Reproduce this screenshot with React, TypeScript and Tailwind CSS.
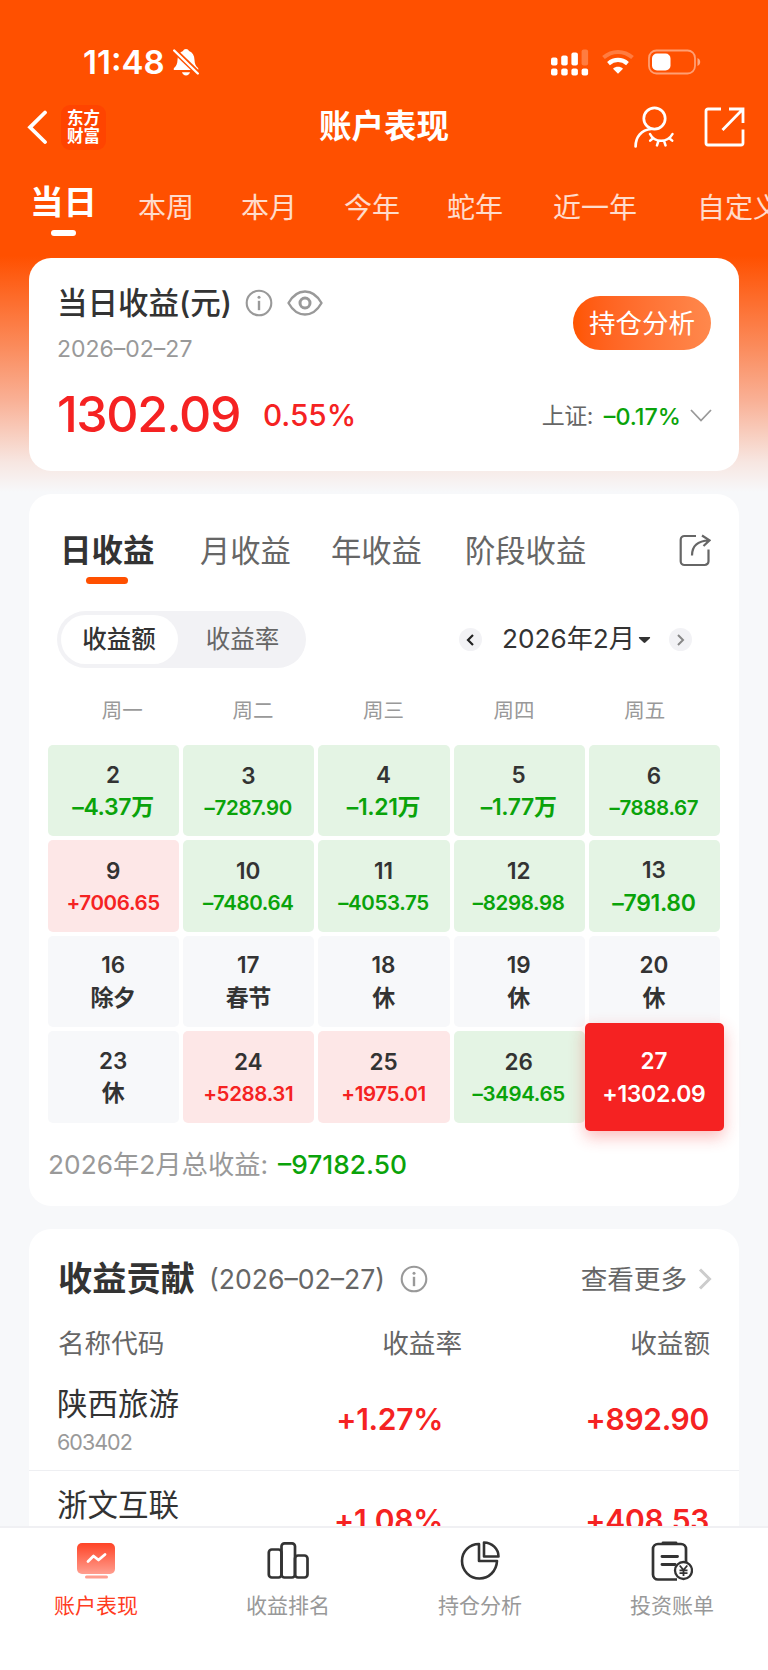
import { clsx } from 'clsx'

type Tone = 'up' | 'down' | 'rest' | 'active'

interface Day {
  day: number
  value: string
  tone: Tone
}

const ranges = [
  { label: '本周', width: 'w-[103px]' },
  { label: '本月', width: 'w-[103px]' },
  { label: '今年', width: 'w-[103px]' },
  { label: '蛇年', width: 'w-[106px]' },
  { label: '近一年', width: 'w-[144px]' },
  { label: '自定义', width: 'w-[90px]' },
]

const weekdays = ['周一', '周二', '周三', '周四', '周五']

const days: Day[] = [
  { day: 2, value: '–4.37万', tone: 'down' },
  { day: 3, value: '–7287.90', tone: 'down' },
  { day: 4, value: '–1.21万', tone: 'down' },
  { day: 5, value: '–1.77万', tone: 'down' },
  { day: 6, value: '–7888.67', tone: 'down' },
  { day: 9, value: '+7006.65', tone: 'up' },
  { day: 10, value: '–7480.64', tone: 'down' },
  { day: 11, value: '–4053.75', tone: 'down' },
  { day: 12, value: '–8298.98', tone: 'down' },
  { day: 13, value: '–791.80', tone: 'down' },
  { day: 16, value: '除夕', tone: 'rest' },
  { day: 17, value: '春节', tone: 'rest' },
  { day: 18, value: '休', tone: 'rest' },
  { day: 19, value: '休', tone: 'rest' },
  { day: 20, value: '休', tone: 'rest' },
  { day: 23, value: '休', tone: 'rest' },
  { day: 24, value: '+5288.31', tone: 'up' },
  { day: 25, value: '+1975.01', tone: 'up' },
  { day: 26, value: '–3494.65', tone: 'down' },
  { day: 27, value: '+1302.09', tone: 'active' },
]

const toneStyles: Record<Tone, string> = {
  up: 'bg-[#fde7e7] text-[#f52222]',
  down: 'bg-[#e4f4e4] text-[#0aa30a]',
  rest: 'bg-[#f7f8fa] text-[#333333]',
  active: 'bg-[#f52222] text-white',
}

function InfoIcon() {
  return (
    <svg className="h-[28px] w-[28px] shrink-0" viewBox="0 0 28 28" fill="none" stroke="#999999">
      <circle cx="14" cy="14" r="12.3" strokeWidth="2.1" />
      <circle cx="14" cy="8.2" r="1.5" fill="#999999" stroke="none" />
      <path d="M14 11.8v9.4" strokeWidth="2.4" />
    </svg>
  )
}

function StatusBar() {
  return (
    <div className="flex h-[84px] items-end justify-between pr-[67px] pl-[83px]">
      <div className="flex h-[44px] items-center">
        <span className="w-[90px] pt-[1px] text-[33px] leading-none font-semibold text-white">11:48</span>
        <svg className="h-[28px] w-[26px]" viewBox="0 0 26 28" fill="none">
          <path
            d="M13 1c-1.4 0-2.6.9-3 2.1C6.5 4.5 4.6 7.6 4.5 12c-.1 4-1.2 5.8-3 7.500-.9.9-1 1.500-.6 2.500h24.200c.5-1 .3-1.700-.6-2.500-1.800-1.700-2.900-3.500-3-7.500-.1-4.400-2-7.500-5.500-8.900C15.600 1.900 14.400 1 13 1z"
            fill="#fff"
          />
          <path d="M9 24.200h8c-.5 2-2 3.200-4 3.200s-3.500-1.200-4-3.200z" fill="#fff" />
          <path d="M0 1.200 26 26.200" stroke="#ff5000" strokeWidth="5.400" />
          <path d="M1.200 2.500 24.800 25.500" stroke="#fff" strokeWidth="2.400" strokeLinecap="round" />
        </svg>
      </div>
      <div className="flex h-[44px] items-center">
        <svg className="h-[28px] w-[38px]" viewBox="0 0 38 28" fill="#fff">
          <rect x="0" y="9.500" width="6.500" height="8" rx="2" />
          <rect x="10.200" y="7.500" width="6.500" height="10" rx="2" />
          <rect x="20.400" y="4.500" width="6.500" height="13" rx="2" />
          <rect x="30.600" y="1.500" width="6.500" height="16" rx="2" fillOpacity=".25" />
          <rect x="0" y="20.500" width="6.500" height="7" rx="2" />
          <rect x="10.200" y="20.500" width="6.500" height="7" rx="2" />
          <rect x="20.400" y="20.500" width="6.500" height="7" rx="2" />
          <rect x="30.600" y="20.500" width="6.500" height="7" rx="2" />
        </svg>
        <svg className="ml-[13px] h-[26px] w-[32px]" viewBox="0 0 32 26" fill="none" stroke="#fff">
          <path d="M1.500 8.600c8.500-7.500 20.500-7.500 29 0" strokeWidth="4" strokeOpacity=".25" />
          <path d="M6.500 14.600c5.600-4.900 13.400-4.900 19 0" strokeWidth="4.200" />
          <path d="M16 24.800 11 19.700c2.800-2.500 7.200-2.500 10 0z" fill="#fff" stroke="none" />
        </svg>
        <svg className="ml-[14px] h-[26px] w-[53px]" viewBox="0 0 53 26" fill="none">
          <rect x="1" y="1.500" width="46" height="23" rx="7.500" stroke="#fff" strokeOpacity=".45" strokeWidth="1.800" />
          <rect x="4" y="4.500" width="18.500" height="17" rx="5" fill="#fff" />
          <path d="M49.500 9v8c1.600-.7 2.700-2.200 2.700-4s-1.100-3.300-2.700-4z" fill="#fff" fillOpacity=".5" />
        </svg>
      </div>
    </div>
  )
}

function Header() {
  return (
    <div className="grid h-[86px] grid-cols-[1fr_auto_1fr] items-center px-[23px] text-white">
      <div className="flex items-center">
        <svg className="ml-[2px] h-[34px] w-[23px]" viewBox="0 0 23 34" fill="none" stroke="#fff" strokeWidth="3.800">
          <path d="M20 2.500 5 17.300l15 14.700" strokeLinecap="round" />
        </svg>
        <div className="ml-[13px] flex h-[45px] w-[45px] flex-col items-center justify-center rounded-[9px] bg-[#ff4400] text-[16.500px] font-bold">
          <span className="flex h-[18.500px] items-center leading-none">东方</span>
          <span className="flex h-[18.500px] items-center leading-none">财富</span>
        </div>
      </div>
      <h1 className="pt-[1px] text-[32.500px] leading-none font-semibold">账户表现</h1>
      <div className="flex items-center justify-end">
        <svg className="h-[42px] w-[40px]" viewBox="0 0 40 42" fill="none" stroke="#fff" strokeWidth="2.700" strokeLinecap="round">
          <circle cx="20.500" cy="12.500" r="10.700" />
          <path d="M1.600 40.500c0-10 6-16.500 15.500-17.500" />
          <path d="M16 28c4.500 9 17.500 9 22.500 0M19 32.200l-2.800 2.400M24.300 35.300 23 39.400M30.200 35.300l1.300 4.100M35.300 32.200l2.900 2.400" strokeWidth="2.500" />
        </svg>
        <svg className="ml-[30px] h-[40px] w-[41px]" viewBox="0 0 41 40" fill="none" stroke="#fff" strokeWidth="2.800">
          <path d="M17 2H4a2 2 0 0 0-2 2v32a2 2 0 0 0 2 2h33a2 2 0 0 0 2-2V22.500" />
          <path d="M25 2H39v14M38.500 2.500 18.500 23" />
        </svg>
      </div>
    </div>
  )
}

function RangeTabs() {
  return (
    <div className="flex h-[88px] overflow-hidden text-white">
      <div className="flex w-[138px] shrink-0 flex-col pl-[30px]">
        <span className="pt-[16px] text-[33.500px] leading-none font-semibold">当日</span>
        <span className="mt-[10px] ml-[21px] h-[6px] w-[25px] rounded-full bg-white" />
      </div>
      {ranges.map((range) => (
        <span key={range.label} className={clsx('shrink-0 pt-[23.500px] text-[28px] leading-none whitespace-nowrap text-white/80', range.width)}>
          {range.label}
        </span>
      ))}
    </div>
  )
}

function SummaryCard() {
  return (
    <section className="mx-[29px] h-[213px] rounded-[22px] bg-white px-[28px]">
      <div className="flex h-[106px] justify-between pt-[26px]">
        <div>
          <div className="flex h-[38px] items-center">
            <h2 className="w-[188px] text-[30.500px] leading-none font-medium whitespace-nowrap text-[#333333]">当日收益(元)</h2>
            <InfoIcon />
            <svg className="ml-[14px] h-[26px] w-[36px]" viewBox="0 0 36 26" fill="none" stroke="#999999" strokeWidth="2.400">
              <path d="M1.500 13C6 5 11.500 1.500 18 1.500S30 5 34.500 13C30 21 24.500 24.500 18 24.500S6 21 1.500 13z" strokeLinejoin="round" />
              <circle cx="18" cy="13" r="5" strokeWidth="3" />
            </svg>
          </div>
          <div className="mt-[16px] text-[23px] leading-none text-[#999999]">2026–02–27</div>
        </div>
        <button className="mt-[12px] h-[54px] w-[138px] rounded-full bg-linear-to-r from-[#ff5500] to-[#ff884c] text-[26.500px] leading-none text-white">
          持仓分析
        </button>
      </div>
      <div className="flex h-[102px] items-center">
        <span className="w-[206px] pb-[2px] text-[50px] leading-none font-medium tracking-[-1.400px] text-[#f52222]">1302.09</span>
        <span className="pt-[2px] text-[29.700px] leading-none font-medium text-[#f52222]">0.55%</span>
        <span className="ml-auto pt-[3px] text-[23px] leading-none tracking-[-0.5px] text-[#666666]">上证:</span>
        <span className="ml-[11px] pt-[3px] text-[23.300px] leading-none font-medium text-[#0aa30a]">–0.17%</span>
        <svg className="mt-[1px] -mr-px ml-[9px] h-[13px] w-[22px]" viewBox="0 0 22 13" fill="none" stroke="#999999" strokeWidth="1.800">
          <path d="M1 1l10 10.500L21 1" />
        </svg>
      </div>
    </section>
  )
}

function DayCell({ day, value, tone }: Day) {
  const active = tone === 'active'
  // long amounts drop to a smaller size so they stay inside the cell
  const small = !active && value.length > 7
  return (
    <div
      className={clsx(
        'flex flex-col items-center rounded-[5px] pr-[1px] font-semibold',
        toneStyles[tone],
        active ? 'relative z-10 -mx-1 -mt-2 -mb-[8px] pt-[26px] shadow-[0_6px_16px_rgba(245,34,34,0.3)]' : small ? 'pt-[19px]' : 'pt-[17.500px]',
      )}
    >
      <span className={clsx('text-[22.500px] leading-[24px]', active ? 'text-white' : 'text-[#333333]')}>{day}</span>
      <span
        className={clsx(
          'flex h-[24px] items-center whitespace-nowrap',
          small ? 'mt-[8px] text-[20.500px] tracking-[-0.350px]' : 'mt-[9px] text-[23px] tracking-[-0.350px]',
        )}
      >
        {value}
      </span>
    </div>
  )
}

function CalendarCard() {
  return (
    <section className="mx-[29px] mt-[23px] h-[712px] rounded-[22px] bg-white pt-[34px]">
      <div className="flex h-[56px] pr-[28px] pl-[31px] text-[30.300px] leading-none whitespace-nowrap text-[#666666]">
        <div className="w-[140px]">
          <div className="pt-[7px] text-[31.500px] leading-none font-bold text-[#333333]">日收益</div>
          <div className="mt-[10px] ml-[26px] h-[7px] w-[42px] rounded-full bg-[#ff5000]" />
        </div>
        <span className="w-[131px] pt-[8px]">月收益</span>
        <span className="w-[134px] pt-[8px]">年收益</span>
        <span className="pt-[8px]">阶段收益</span>
        <svg className="mt-[6px] ml-auto h-[33px] w-[32px]" viewBox="0 0 32 33" fill="none" stroke="#666666" strokeWidth="2.200">
          <path d="M17 2H5.500A3.800 3.800 0 0 0 1.700 5.800v21.400A3.800 3.800 0 0 0 5.500 31h20.200a3.800 3.800 0 0 0 3.800-3.800V15.500" />
          <path d="M13 21.500C13 12.500 18.500 6.800 30 6.500M23 1.500l7.500 4.900L24.500 12" />
        </svg>
      </div>

      <div className="mt-[27px] flex h-[57px] items-center pr-[47px] pl-[28px]">
        <div className="flex h-[57px] w-[249px] items-center rounded-full bg-[#f2f2f5] px-[4px] text-[24.500px] leading-none text-[#666666]">
          <span className="flex h-[49px] w-[117px] items-center justify-center rounded-full bg-white pr-[1px] font-medium text-[#333333]">收益额</span>
          <span className="flex-1 pl-[5px] text-center">收益率</span>
        </div>
        <span className="ml-auto flex h-[23px] w-[23px] items-center justify-center rounded-full bg-[#f2f2f5]">
          <svg className="h-[12px] w-[8px]" viewBox="0 0 8 12" fill="none" stroke="#222222" strokeWidth="2.200">
            <path d="M7 1 2 6l5 5" />
          </svg>
        </span>
        <span className="ml-[20px] text-[26.200px] leading-none text-[#333333]">2026年2月</span>
        <svg className="ml-[3px] h-[8px] w-[13px]" viewBox="0 0 13 8" fill="#333333">
          <path d="M1.600 1h9.800c.8 0 1 .7.500 1.200L7.400 6.500c-.5.500-1.300.5-1.800 0L1.100 2.200C.6 1.700.8 1 1.600 1z" />
        </svg>
        <span className="ml-[18px] flex h-[23px] w-[23px] items-center justify-center rounded-full bg-[#f2f2f5]">
          <svg className="h-[12px] w-[8px]" viewBox="0 0 8 12" fill="none" stroke="#888888" strokeWidth="2">
            <path d="M1 1l5 5-5 5" />
          </svg>
        </span>
      </div>

      <div className="mt-[32px] flex h-[22px] items-center pl-[28px] text-[20.500px] leading-none text-[#999999]">
        {weekdays.map((name) => (
          <span key={name} className="w-[130.600px] text-center">
            {name}
          </span>
        ))}
      </div>

      <div className="mx-[19px] mt-[23px] grid auto-rows-[91.400px] grid-cols-5 gap-1">
        {days.map((item) => (
          <DayCell key={item.day} {...item} />
        ))}
      </div>

      <div className="mt-[22.500px] flex h-[40px] items-center pl-[19px] text-[26.300px] leading-none text-[#999999]">
        <span>2026年2月总收益:</span>
        <span className="ml-[10px] font-medium text-[#0aa30a]">–97182.50</span>
      </div>
    </section>
  )
}

interface HoldingProps {
  name: string
  code: string
  rate: string
  amount: string
}

function HoldingRow({ name, code, rate, amount }: HoldingProps) {
  return (
    <div className="flex h-[101px] items-center border-b border-[#eeeff2] pr-[30px] pl-[28px]">
      <div className="w-[200px] pt-[2px]">
        <div className="text-[30.500px] leading-none text-[#333333]">{name}</div>
        <div className="mt-[12px] text-[21.500px] leading-none tracking-[-1px] text-[#999999]">{code}</div>
      </div>
      <span className="w-[186px] pb-[2px] text-right text-[30px] leading-none font-semibold tracking-[-0.300px] text-[#f52222]">{rate}</span>
      <span className="ml-auto pb-[2px] text-[30px] leading-none font-semibold tracking-[-0.300px] text-[#f52222]">{amount}</span>
    </div>
  )
}

function ContributionCard() {
  return (
    <section className="mx-[29px] mt-[23px] rounded-t-[22px] bg-white pt-[28px]">
      <div className="flex h-[44px] items-center pr-[27px] pl-[29px] text-[26.600px] leading-none whitespace-nowrap text-[#666666]">
        <h2 className="w-[151px] text-[34.200px] leading-none font-bold text-[#333333]">收益贡献</h2>
        <span className="w-[191px]">(2026–02–27)</span>
        <InfoIcon />
        <span className="ml-auto">查看更多</span>
        <svg className="ml-[11px] h-[22px] w-[14px]" viewBox="0 0 14 22" fill="none" stroke="#cccccc" strokeWidth="3">
          <path d="M2 1.500l9.500 9.500L2 20.500" />
        </svg>
      </div>
      <div className="mt-[22px] flex h-[40px] items-center pr-[29px] pl-[29px] text-[26.600px] leading-none text-[#666666]">
        <span className="w-[200px]">名称代码</span>
        <span className="w-[204px] text-right">收益率</span>
        <span className="ml-auto">收益额</span>
      </div>
      <div className="mt-[7px]">
        <HoldingRow name="陕西旅游" code="603402" rate="+1.27%" amount="+892.90" />
        <HoldingRow name="浙文互联" code="600986" rate="+1.08%" amount="+408.53" />
      </div>
    </section>
  )
}

function BottomNav() {
  return (
    <nav className="grid h-[144px] shrink-0 grid-cols-4 border-t-2 border-[#f0f0f3] bg-white text-[21px] leading-none text-[#999999]">
      <div className="flex flex-col items-center pt-[13px] text-[#ff3d1f]">
        <svg className="h-[42px] w-[42px]" viewBox="0 0 42 42" fill="none">
          <defs>
            <linearGradient id="navActive" x1="0" y1="0" x2="0" y2="1">
              <stop stopColor="#ff4326" />
              <stop offset="1" stopColor="#ff9e8f" />
            </linearGradient>
          </defs>
          <rect x="2" y="2" width="38" height="31" rx="5" fill="url(#navActive)" />
          <path d="m13 20.500 5.500-5.500 5 4 6.500-5.500" stroke="#fff" strokeWidth="2.800" strokeLinecap="round" strokeLinejoin="round" />
          <rect x="10" y="34.500" width="23" height="3" rx="1.500" fill="#ff9e8f" />
        </svg>
        <span className="mt-[12px]">账户表现</span>
      </div>
      <div className="flex flex-col items-center pt-[13px]">
        <svg className="h-[42px] w-[42px]" viewBox="0 0 42 42" fill="none" stroke="#333333" strokeWidth="2.700">
          <rect x="1.800" y="8.500" width="12.700" height="28" rx="3" />
          <rect x="14.500" y="2.300" width="13.500" height="34.200" rx="3" />
          <rect x="28" y="14.500" width="12.500" height="22" rx="3" />
        </svg>
        <span className="mt-[12px]">收益排名</span>
      </div>
      <div className="flex flex-col items-center pt-[13px]">
        <svg className="h-[42px] w-[42px]" viewBox="0 0 42 42" fill="none" stroke="#333333" strokeWidth="2.600" strokeLinejoin="round">
          <path d="M20 3C10.500 3 3 10.500 3 20s7.500 17.500 17.500 17.500c9.500 0 17-7.500 17.500-17.500H20z" />
          <path d="M25 1.500V15.500h14.500C39.500 8 33 1.500 25 1.500z" />
        </svg>
        <span className="mt-[12px]">持仓分析</span>
      </div>
      <div className="flex flex-col items-center pt-[13px]">
        <svg className="h-[42px] w-[42px]" viewBox="0 0 42 42" fill="none" stroke="#333333" strokeWidth="2.700">
          <path d="M26 38.500H7a5 5 0 0 1-5-5V8a5 5 0 0 1 5-5h23a5 5 0 0 1 5 5v13" />
          <path d="M12 2h13M11 15.500h15.500M11 23.500h13" strokeWidth="2.900" strokeLinecap="round" />
          <circle cx="32.500" cy="29.500" r="8.500" fill="#fff" strokeWidth="2.300" />
          <path d="m28.700 24.500 3.800 4.500 3.800-4.500M32.500 29v6M28.500 29.300h8M28.500 32.200h8" strokeWidth="1.800" />
        </svg>
        <span className="mt-[12px]">投资账单</span>
      </div>
    </nav>
  )
}

export default function App() {
  return (
    <div className="flex h-[1670px] w-[768px] flex-col overflow-hidden bg-[#f7f8fa] font-['Inter','Noto_Sans_CJK_SC',sans-serif]">
      <main className="min-h-0 flex-1 overflow-hidden bg-[linear-gradient(to_bottom,#ff5000_0px,#ff5000_256px,#fb8a5a_345px,#f9b095_400px,#f7e6e1_462px,#f7f8fa_492px)]">
        <StatusBar />
        <Header />
        <RangeTabs />
        <SummaryCard />
        <CalendarCard />
        <ContributionCard />
      </main>
      <BottomNav />
    </div>
  )
}
